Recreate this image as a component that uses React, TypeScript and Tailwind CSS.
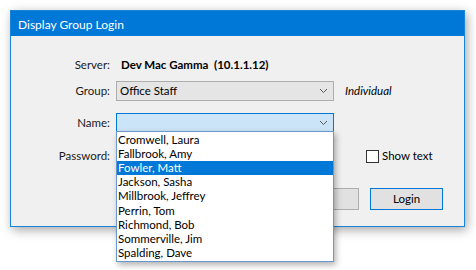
import React from 'react'

const font = { fontFamily: 'Lato, "Noto Sans", sans-serif' }

const names = [
  'Cromwell, Laura',
  'Fallbrook, Amy',
  'Fowler, Matt',
  'Jackson, Sasha',
  'Millbrook, Jeffrey',
  'Perrin, Tom',
  'Richmond, Bob',
  'Sommerville, Jim',
  'Spalding, Dave',
]

function Chevron() {
  return (
    <svg width="9" height="6" viewBox="0 0 9 6" className="shrink-0">
      <path d="M1 1 L4.5 4.5 L8 1" fill="none" stroke="#5a5a5a" strokeWidth="1" />
    </svg>
  )
}

function Label({ children }: { children: React.ReactNode }) {
  return <div className="w-[99px] shrink-0 text-right text-[#1a1a1a]">{children}</div>
}

export default function App() {
  const selected = 'Fowler, Matt'

  return (
    <div className="w-[476px] h-[270px] bg-white overflow-hidden pt-[10px] pl-[10px]" style={font}>
      <div className="relative w-[455px] h-[217px] border border-[#1883d7] bg-[#f0f0f0] shadow-[2px_3px_10px_rgba(0,0,0,0.35)] text-[11.5px] leading-none">
        <div className="h-[25px] bg-[#0078d7] text-white text-[12px] flex items-center pl-[7px] pt-[2px]">Display Group Login</div>

        <div className="flex flex-col">
          <div className="flex items-center h-[20px] mt-[19px] gap-[6px]">
            <Label>Server:</Label>
            <div className="pl-[5px] font-bold text-black whitespace-pre">Dev Mac Gamma  (10.1.1.12)</div>
          </div>

          <div className="flex items-center h-[20px] mt-[6px] gap-[6px]">
            <Label>Group:</Label>
            <div className="w-[218px] h-[20px] border border-[#adadad] bg-[#e5e5e5] flex items-center justify-between pl-[3px] pr-[5px]">
              <span>Office Staff</span>
              <Chevron />
            </div>
            <div className="ml-[5px] italic">Individual</div>
          </div>

          <div className="flex items-center h-[20px] mt-[12px] gap-[6px]">
            <Label>Name:</Label>
            <div className="w-[218px] h-[20px] border border-[#0078d7] bg-[#cce4f7] flex items-center justify-end pr-[5px]">
              <Chevron />
            </div>
          </div>

          <div className="flex items-center h-[20px] mt-[13px] gap-[6px]">
            <Label>Password:</Label>
            <div className="w-[218px] h-[20px] border border-[#7a7a7a] bg-white" />
            <div className="ml-[26px] flex items-center gap-[3px]">
              <div className="w-[13px] h-[13px] border border-[#333333] bg-white" />
              <span>Show text</span>
            </div>
          </div>

          <div className="flex justify-end gap-[11px] pr-[21px] mt-[22px]">
            <button className="w-[100px] h-[22px] border border-[#adadad] bg-[#e1e1e1]">Cancel</button>
            <button className="w-[73px] h-[22px] border border-[#0078d7] bg-[#e1e1e1]">Login</button>
          </div>
        </div>

        <div className="absolute left-[105px] top-[120px] w-[218px] h-[131px] border border-[#6b97cf] bg-white shadow-[2px_3px_6px_rgba(0,0,0,0.3)] flex flex-col py-[1px]">
          {names.map((n) => (
            <div
              key={n}
              className={`h-[14.3px] leading-[14px] overflow-hidden pl-[1px] ${n === selected ? 'bg-[#0078d7] text-white' : 'text-black'}`}
            >
              {n}
            </div>
          ))}
        </div>
      </div>
    </div>
  )
}
